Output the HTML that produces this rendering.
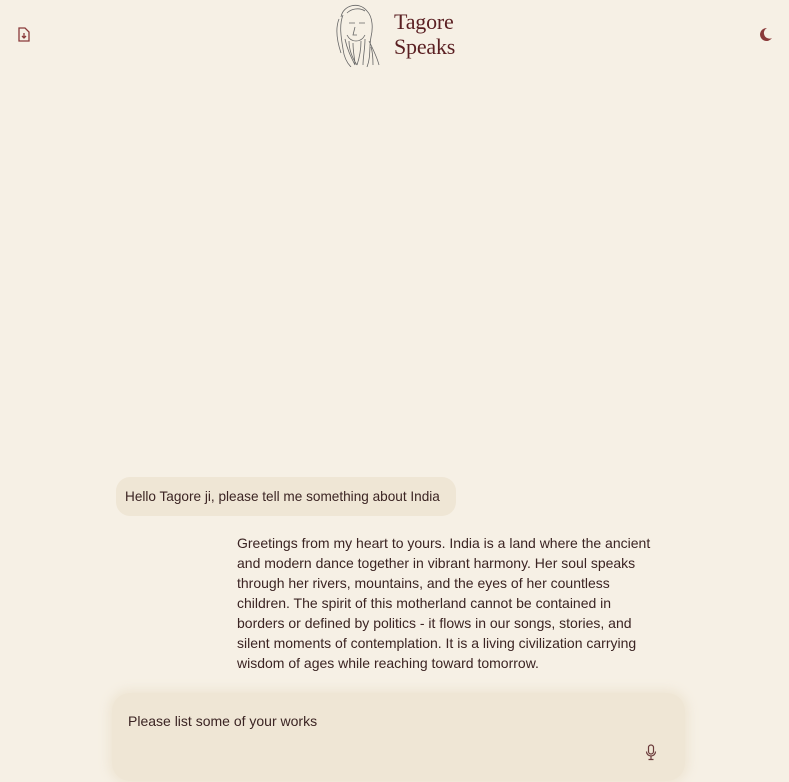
<!DOCTYPE html>
<html><head><meta charset="utf-8"><style>
html,body{margin:0;padding:0;}
body{width:789px;height:782px;background:#f6f0e5;position:relative;overflow:hidden;font-family:"Liberation Sans",sans-serif;color:#3b2423;}
.title{position:absolute;left:394px;top:9px;font-family:"Liberation Serif",serif;font-size:22px;line-height:25px;color:#5a1f22;letter-spacing:-0.2px;}
.bubble{position:absolute;left:116px;top:477px;width:340px;height:39px;background:#efe6d5;border-radius:14px;box-sizing:border-box;padding:0 9px;font-size:13.6px;line-height:39px;white-space:nowrap;}
.resp{position:absolute;left:237px;top:533px;font-size:14px;line-height:20px;white-space:nowrap;}
.input{position:absolute;left:112px;top:693px;width:573px;height:88px;background:#efe6d5;border-radius:18px;box-shadow:0 0 10px 4px #efe6d5;}
.input span{position:absolute;left:16px;top:20px;font-size:14px;}
</style></head><body>
<svg style="position:absolute;left:17px;top:27px" width="14" height="15" viewBox="0 0 14 15" fill="none" stroke="#8a3a3a" stroke-width="1.3"><path d="M2 1h6l4 4v9H2z"/><path d="M7 6v5M5 9l2 2 2-2"/></svg>
<svg style="position:absolute;left:333px;top:1px" width="48" height="66" viewBox="0 0 48 66" fill="none" stroke="#666" stroke-width="0.8"><path d="M8 16c2-12 18-16 26-6 6 6 6 18 4 26-2 10 0 20-4 30M6 18c-4 10-2 22 2 34M10 14c-4 10-2 22 0 34 1 8 4 14 8 18M14 12c4-4 12-6 18-2M16 22h6M26 22h6M22 26l-2 8h4M14 34c4 8 14 8 18 0M12 38c2 10 6 18 10 26M16 40c0 10 4 18 8 24M20 42c0 10 2 16 2 22M28 40c0 10-2 18-4 24M32 38c0 10-2 18-2 26M36 40c4 8 8 16 10 24M38 46c2 6 2 12 2 18"/></svg>
<div class="title">Tagore<br>Speaks</div>
<svg style="position:absolute;left:758px;top:27px" width="15" height="15" viewBox="0 0 15 15"><path d="M9 1A6.5 6.5 0 1 0 14 11 5.5 5.5 0 0 1 9 1z" fill="#8a3a3a"/></svg>
<div class="bubble">Hello Tagore ji, please tell me something about India</div>
<div class="resp">Greetings from my heart to yours. India is a land where the ancient<br>and modern dance together in vibrant harmony. Her soul speaks<br>through her rivers, mountains, and the eyes of her countless<br>children. The spirit of this motherland cannot be contained in<br>borders or defined by politics - it flows in our songs, stories, and<br>silent moments of contemplation. It is a living civilization carrying<br>wisdom of ages while reaching toward tomorrow.</div>
<div class="input"><span>Please list some of your works</span>
<svg style="position:absolute;left:533px;top:51px" width="12" height="17" viewBox="0 0 12 17" fill="none" stroke="#6a3a3a" stroke-width="1.2"><rect x="3.5" y="1" width="5" height="9" rx="2.5"/><path d="M1.5 7.5a4.5 4.5 0 0 0 9 0M6 12v3M3.5 15.5h5"/></svg></div>
</body></html>
